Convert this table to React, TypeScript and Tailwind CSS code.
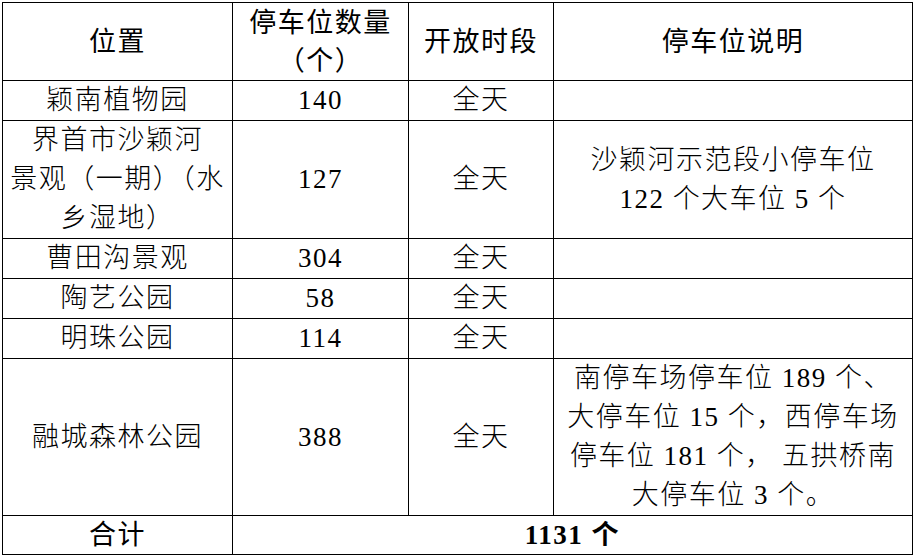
const rows = [
  { place: ["颖南植物园"], count: "140", note: [] as string[], h: "h-[40px]" },
  {
    place: ["界首市沙颖河", "景观（一期）（水", "乡湿地）"],
    count: "127",
    note: ["沙颖河示范段小停车位", "122 个大车位 5 个"],
    h: "h-[117px]",
  },
  { place: ["曹田沟景观"], count: "304", note: [], h: "h-[40px]" },
  { place: ["陶艺公园"], count: "58", note: [], h: "h-[40px]" },
  { place: ["明珠公园"], count: "114", note: [], h: "h-[40px]" },
  {
    place: ["融城森林公园"],
    count: "388",
    note: ["南停车场停车位 189 个、", "大停车位 15 个，西停车场", "停车位 181 个， 五拱桥南", "大停车位 3 个。"],
    h: "h-[156px]",
  },
]

const cell = "border border-black text-center align-middle p-0"

export default function App() {
  return (
    <div className="w-[916px] h-[557px] bg-white pt-[2px] pl-[2px] text-black font-['Liberation_Serif','Noto_Sans_CJK_SC',serif] text-[27px] tracking-[1.5px]">
      <table className="table-fixed border-collapse w-[910px]">
        <colgroup>
          <col className="w-[230px]" />
          <col className="w-[176px]" />
          <col className="w-[145px]" />
          <col className="w-[359px]" />
        </colgroup>
        <tbody>
          <tr className="h-[78px] leading-[38px]">
            <td className={cell}>位置</td>
            <td className={cell}>
              停车位数量
              <br />
              （个）
            </td>
            <td className={cell}>开放时段</td>
            <td className={cell}>停车位说明</td>
          </tr>
          {rows.map((r, i) => (
            <tr key={i} className={`${r.h} leading-[39px] font-light`}>
              <td className={cell}>
                {r.place.map((p, j) => (
                  <div key={j} className="whitespace-nowrap">{p}</div>
                ))}
              </td>
              <td className={cell}>{r.count}</td>
              <td className={cell}>全天</td>
              <td className={cell}>
                {r.note.map((n, j) => (
                  <div key={j} className="whitespace-pre">{n}</div>
                ))}
              </td>
            </tr>
          ))}
          <tr className="h-[39px] leading-[38px]">
            <td className={cell}>合计</td>
            <td className={`${cell} font-bold`} colSpan={3}>
              1131 个
            </td>
          </tr>
        </tbody>
      </table>
    </div>
  )
}
